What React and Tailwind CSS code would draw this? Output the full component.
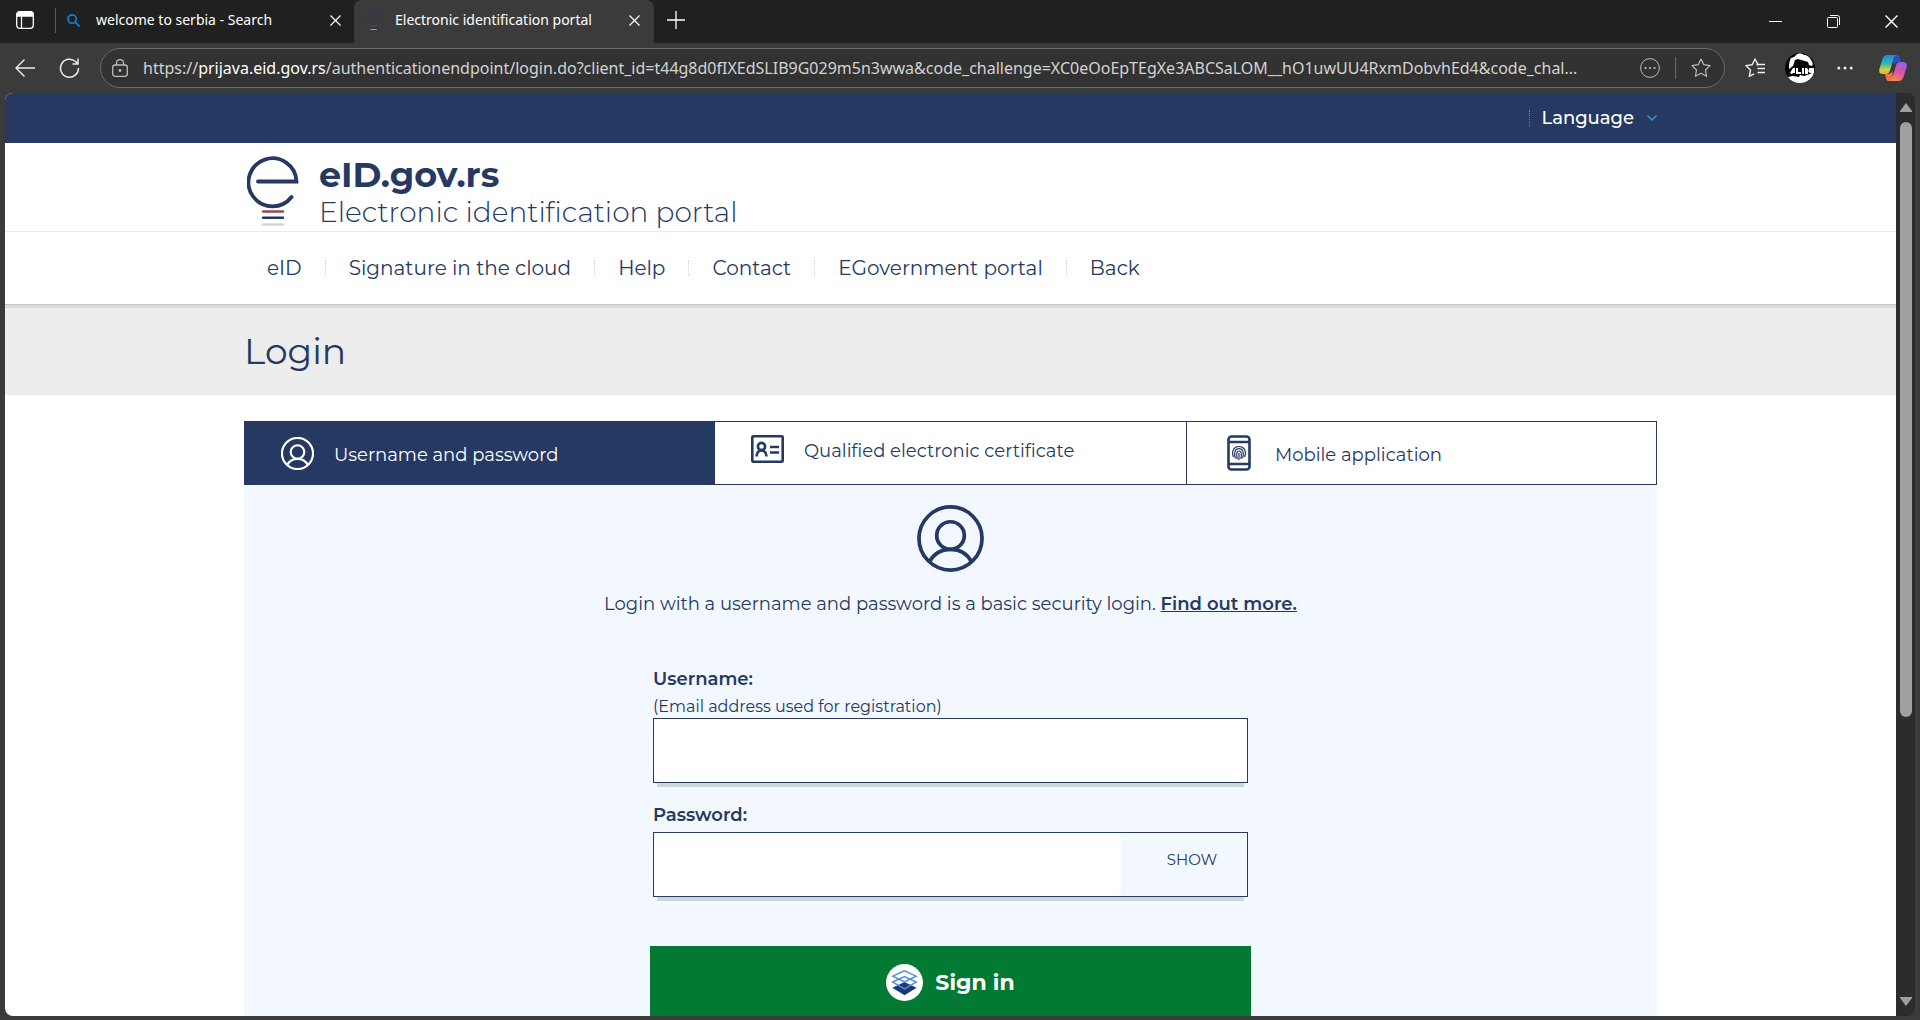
import React, { useState } from 'react';

const NAV_LINKS = ['eID', 'Signature in the cloud', 'Help', 'Contact', 'EGovernment portal', 'Back'];

function CloseIcon({ className }) {
  return (
    <svg viewBox="0 0 12 12" className={className} fill="none" stroke="currentColor" strokeWidth="1.3">
      <path d="M.5.5l11 11M11.5.5l-11 11" />
    </svg>
  );
}

function UserIcon({ className, strokeWidth }) {
  return (
    <svg viewBox="0 0 68 68" className={className} fill="none" stroke="currentColor" strokeWidth={strokeWidth}>
      <circle cx="34" cy="34" r="32" />
      <circle cx="34" cy="31" r="14" />
      <path d="M12.500 58C17 49 24.500 45 34 45s17 4 21.500 13" />
    </svg>
  );
}

function CertificateIcon() {
  return (
    <svg viewBox="0 0 33 28" className="h-7 w-[33px]" fill="none" stroke="currentColor" strokeWidth="2.600">
      <rect x="1.300" y="1.300" width="30.400" height="25.400" rx="1" />
      <circle cx="10.500" cy="11.500" r="3.600" />
      <path d="M5.500 21.500c.3-4 2.200-6 5-6s4.700 2 5 6M19 12h9M19 17.500h9" />
    </svg>
  );
}

function PhoneIcon() {
  return (
    <svg viewBox="0 0 24 36" className="h-9 w-6" fill="none" stroke="currentColor">
      <rect x="1.500" y="1.500" width="21" height="33" rx="3" strokeWidth="2.600" />
      <path d="M1.500 7h21M1.500 29h21" strokeWidth="2.600" />
      <g strokeWidth="1.200">
        <path d="M6.500 22c-2.500-6 .5-10.500 5.500-10.500S20 16 17.500 22" />
        <path d="M8.500 23.500c-2-5.500-.5-9.800 3.500-9.800s5.400 4.500 3.500 9.500" />
        <path d="M10.300 24.300c-1-4.500-1-8.300 1.700-8.300s2.800 4 1.800 8" />
        <path d="M12 18v7" />
      </g>
    </svg>
  );
}

function PortalLogo({ className }) {
  return (
    <svg viewBox="0 0 52 70" className={className} fill="none" strokeLinecap="round">
      <path d="M44.500 41A24 24 0 1 1 49.500 25.500H11" stroke="#253962" strokeWidth="3.800" />
      <path d="M16 55.500h20" stroke="#9b4650" strokeWidth="2.400" />
      <path d="M16 61.800h20" stroke="#253962" strokeWidth="2.400" />
      <path d="M16 68.500h20" stroke="#d6d6d8" strokeWidth="2.400" />
    </svg>
  );
}

function CopilotIcon() {
  return (
    <svg viewBox="0 0 28 26" className="h-[26px] w-7">
      <defs>
        <linearGradient id="cpLeft" x1="0" y1="0" x2="0" y2="1">
          <stop offset="0" stopColor="#1b8be0" />
          <stop offset=".45" stopColor="#35b5b0" />
          <stop offset=".75" stopColor="#c9d13c" />
          <stop offset="1" stopColor="#f0b429" />
        </linearGradient>
        <linearGradient id="cpRight" x1=".6" y1="0" x2=".2" y2="1">
          <stop offset="0" stopColor="#9a5cf0" />
          <stop offset=".5" stopColor="#e0579a" />
          <stop offset="1" stopColor="#f98b52" />
        </linearGradient>
      </defs>
      <path d="M14 0h4c1.800 0 2.500 1 3 2.600L22 7h-3c-2.500 0-3.500 1.300-4.200 3.500z" fill="#2453c9" />
      <path d="M14 26h-4c-1.800 0-2.500-1-3-2.600L6 19h3c2.500 0 3.500-1.300 4.200-3.500z" fill="#f2723f" />
      <path d="M8.500 0H18c-2 0-2.800 1.500-3.400 3.400L11 15.500C10.200 18 9 19 6.500 19H3.800C.8 19-.4 17 .4 14L3.500 4C4.400 1.300 6 0 8.500 0z" fill="url(#cpLeft)" />
      <path d="M19.500 26H10c2 0 2.800-1.500 3.400-3.400L17 10.500C17.800 8 19 7 21.500 7h2.700c3 0 4.200 2 3.400 5l-3.100 10c-.9 2.700-2.500 4-5 4z" fill="url(#cpRight)" />
    </svg>
  );
}

function Avatar() {
  return (
    <svg viewBox="0 0 30 30" className="size-[30px]">
      <circle cx="15" cy="15" r="15" fill="#050505" />
      <path d="M6 5c2-1 4-1 5-3 2-2 6-2 8 0 3 0 6 2 7 5 2 2 2 5 1 6l-3-1-1-3-10-3-3 1-2 6-4 3c0-4 0-8 2-11z" fill="#fff" />
      <path d="M3 24l5-1 6 1 1-2 4 1 6-2 4-2c-1 6-7 11-14 11-5 0-9-2-12-6z" fill="#fff" />
      <path d="M5 20l3-5h2v5H8l-1 1zM11 15h2v4h3v2h-5zM17 15h2v6h-2zM20 15h2l2 3v-3h5v5h-4l-2-2v3h-3z" fill="#fff" />
    </svg>
  );
}

function TabStrip() {
  return (
    <div className="flex h-[43px] items-stretch bg-[#202020] text-white">
      <div className="flex w-[354px] items-center pb-[3px] pl-4 pr-[13px]">
        <button type="button" aria-label="Tab actions" className="mr-[21px]">
          <svg viewBox="0 0 18 18" className="size-[18px]" fill="none" stroke="currentColor" strokeWidth="1.300">
            <rect x=".7" y=".7" width="16.600" height="16.600" rx="3" />
            <path d="M1 3.500C1 2 2 1 3.500 1h11C16 1 17 2 17 3.500V5H1z" fill="currentColor" />
            <path d="M5.500 5v12" />
          </svg>
        </button>
        <span className="h-[25px] w-px bg-[#5a5a5a]" />
        <svg viewBox="0 0 14 14" className="ml-[11px] size-[13px] text-[#1480d8]" fill="none" stroke="currentColor" strokeWidth="1.800">
          <circle cx="5.500" cy="5.500" r="4.500" />
          <path d="M9 9l4.500 4.500" />
        </svg>
        <span className="ml-4 flex-1 whitespace-nowrap text-sm">welcome to serbia - Search</span>
        <button type="button" aria-label="Close tab"><CloseIcon className="size-[11px]" /></button>
      </div>
      <div className="flex w-[300px] items-center rounded-t-lg bg-[#3b3b3b] pb-[3px] pl-3 pr-[14px]">
        <PortalLogo className="h-5 w-[15px]" />
        <span className="ml-[14px] flex-1 whitespace-nowrap text-sm">Electronic identification portal</span>
        <button type="button" aria-label="Close tab"><CloseIcon className="size-[11px]" /></button>
      </div>
      <button type="button" aria-label="New tab" className="px-[13px] pb-[3px]">
        <svg viewBox="0 0 18 18" className="size-[18px]" stroke="currentColor" strokeWidth="1.300">
          <path d="M9 0v18M0 9h18" />
        </svg>
      </button>
      <div className="ml-auto flex">
        <button type="button" aria-label="Minimize" className="flex w-[58px] items-center justify-center">
          <span className="h-px w-[13px] bg-white" />
        </button>
        <button type="button" aria-label="Restore" className="flex w-[58px] items-center justify-center">
          <svg viewBox="0 0 13 13" className="size-[13px]" fill="none" stroke="currentColor">
            <rect x=".5" y="2.500" width="10" height="10" rx="1" />
            <path d="M3 .5h7.500a2 2 0 0 1 2 2V10" />
          </svg>
        </button>
        <button type="button" aria-label="Close" className="flex w-[58px] items-center justify-center">
          <CloseIcon className="size-[13px]" />
        </button>
      </div>
    </div>
  );
}

function Toolbar() {
  return (
    <div className="flex h-[50px] items-center bg-[#3b3b3b] pl-[15px] pr-[13px] text-[#eee]">
      <button type="button" aria-label="Back">
        <svg viewBox="0 0 20 18" className="h-[18px] w-5" fill="none" stroke="currentColor" strokeWidth="1.400">
          <path d="M20 9H1M9.500.5L1 9l8.500 8.500" />
        </svg>
      </button>
      <button type="button" aria-label="Refresh" className="ml-6">
        <svg viewBox="0 0 21 20" className="h-5 w-[21px]" fill="none" stroke="currentColor" strokeWidth="1.500">
          <path d="M19.500 10A9 9 0 1 1 16.500 3.500l2 2M19 .5v5.500h-5.500" />
        </svg>
      </button>
      <div className="ml-5 flex h-10 min-w-0 flex-1 items-center rounded-full border border-[#6b6b6b] bg-[#323232] pl-[11px] pr-[13px] text-[#bbb]">
        <svg viewBox="0 0 16 18" className="h-[18px] w-4" fill="none" stroke="currentColor" strokeWidth="1.300">
          <rect x=".7" y="6" width="14.600" height="11.300" rx="2.500" />
          <path d="M4.500 6V4a3.500 3.500 0 0 1 7 0v2" />
          <circle cx="8" cy="11.500" r=".8" fill="currentColor" />
        </svg>
        <div className="ml-[15px] min-w-0 flex-1 overflow-hidden whitespace-nowrap text-base text-[#d2d2d2]">
          https://<span className="text-white">prijava.eid.gov.rs</span>
          /authenticationendpoint/login.do?client_id=t44g8d0fIXEdSLIB9G029m5n3wwa&amp;code_challenge=XC0eOoEpTEgXe3ABCSaLOM__hO1uwUU4RxmDobvhEd4&amp;code_chal...
        </div>
        <button type="button" aria-label="Page actions" className="ml-[15px]">
          <svg viewBox="0 0 20 20" className="size-5" fill="none" stroke="currentColor">
            <circle cx="10" cy="10" r="9.400" />
            <path d="M5.500 10h.1M10 10h.1M14.500 10h.1" strokeWidth="2.200" strokeLinecap="round" />
          </svg>
        </button>
        <span className="ml-[15px] h-[22px] w-px bg-[#6b6b6b]" />
        <button type="button" aria-label="Add to favorites" className="ml-[15px]">
          <svg viewBox="0 0 20 20" className="size-5" fill="none" stroke="currentColor" strokeWidth="1.200" strokeLinejoin="round">
            <path d="M10 1l2.800 5.700 6.200.9-4.500 4.400 1.100 6.300L10 15.300l-5.600 3 1.100-6.300L1 7.600l6.200-.9z" />
          </svg>
        </button>
      </div>
      <button type="button" aria-label="Favorites" className="ml-5">
        <svg viewBox="0 0 20 20" className="size-5" fill="none" stroke="currentColor" strokeWidth="1.400" strokeLinejoin="round">
          <path d="M11.500 6.700H13L10 1 7.200 6.700.8 7.600l4.700 4.400-1.200 6.400L9 15.800M12.500 10.500H20M12.500 14.500H20M12.500 6.500H20" />
        </svg>
      </button>
      <button type="button" aria-label="Profile" className="ml-5"><Avatar /></button>
      <button type="button" aria-label="Settings and more" className="ml-[22px]">
        <svg viewBox="0 0 16 4" className="h-1 w-4" fill="currentColor">
          <circle cx="1.800" cy="2" r="1.500" />
          <circle cx="8" cy="2" r="1.500" />
          <circle cx="14.200" cy="2" r="1.500" />
        </svg>
      </button>
      <button type="button" aria-label="Copilot" className="ml-[26px]"><CopilotIcon /></button>
    </div>
  );
}

function Scrollbar() {
  return (
    <div className="flex w-[19px] flex-col items-center rounded-r-lg bg-[#2c2c2c] py-[10px]">
      <svg viewBox="0 0 12 9" className="h-[9px] w-3" fill="#9f9f9f"><path d="M6 0l6 8v1H0V8z" /></svg>
      <div className="mt-[10px] flex-1">
        <div className="h-[68%] w-3 rounded-full bg-[#9f9f9f]" />
      </div>
      <svg viewBox="0 0 12 9" className="h-[9px] w-3" fill="#9f9f9f"><path d="M6 9l6-8V0H0v1z" /></svg>
    </div>
  );
}

function LoginForm() {
  const [visible, setVisible] = useState(false);

  return (
    <form className="mx-auto mt-[47px] w-[601px]" onSubmit={(event) => event.preventDefault()}>
      <div className="px-[3px]">
        <label htmlFor="username" className="block">
          <span className="block text-lg font-semibold">Username:</span>
          <span className="mt-[3px] block whitespace-nowrap text-base leading-[21px]">(Email address used for registration)</span>
        </label>
        <div className="mt-px h-[65px] border border-[#2a3a58] shadow-[0_8px_0_-4px_#c9d8dc]">
          <input id="username" type="text" className="block h-full w-full rounded-md bg-white px-4 text-lg outline-none" />
        </div>
        <label htmlFor="password" className="mt-[18px] block text-lg font-semibold">Password:</label>
        <div className="mt-[3px] flex h-[65px] border border-[#2a3a58] shadow-[0_8px_0_-4px_#c9d8dc]">
          <input
            id="password"
            type={visible ? 'text' : 'password'}
            className="block h-full min-w-0 flex-1 rounded-md bg-white px-4 text-lg outline-none"
          />
          <button type="button" onClick={() => setVisible(!visible)} className="w-[126px] pb-2 pl-4 text-[15px]">
            SHOW
          </button>
        </div>
      </div>
      <button type="submit" className="mt-[49px] flex h-[73px] w-full items-center justify-center gap-3 bg-[#027a33] text-[22px] font-bold text-white">
        <svg viewBox="0 0 38 38" className="size-[37px]">
          <circle cx="19" cy="19" r="19" fill="#fff" />
          <path d="M6.500 24.500l12.500-6 12.500 6L19 32z" fill="#1b3a77" />
          <g fill="none" stroke="#4f8edb" strokeWidth="1.500">
            <path d="M7 12.500l12-5.500 12 5.500-12 6z" />
            <path d="M7 18.500l12-5.500 12 5.500-12 7z" />
          </g>
        </svg>
        Sign in
      </button>
    </form>
  );
}

function PortalPage() {
  return (
    <div className="min-w-0 flex-1 overflow-hidden rounded-l-lg bg-white font-['Montserrat',Inter,sans-serif] text-[#253962]">
      <div className="h-[50px] bg-[#253962]">
        <div className="mx-auto flex h-full w-[1413px] max-w-full items-center justify-end">
          <button type="button" className="flex items-center border-l border-dotted border-[#4b86d3] pl-[11px] text-lg leading-4 font-medium text-white">
            Language
            <svg viewBox="0 0 10 6" className="ml-[13px] h-[6px] w-[10px]" fill="none" stroke="#4b86d3" strokeWidth="1.500">
              <path d="M.5.5L5 5 9.500.5" />
            </svg>
          </button>
        </div>
      </div>

      <header>
        <div className="h-[89px] border-b border-[#e9e9e9]">
          <a href="#" className="mx-auto flex w-[1413px] max-w-full gap-5 pl-[3px] pt-[13px]">
            <PortalLogo className="h-[70px] w-[52px]" />
            <span className="block">
              <span className="block text-[35px] leading-[38px] font-bold">eID.gov.rs</span>
              <span className="block text-[28px] leading-[36px] font-light">Electronic identification portal</span>
            </span>
          </a>
        </div>
        <nav className="mx-auto flex h-[72px] w-[1413px] max-w-full items-center text-xl">
          {NAV_LINKS.map((label) => (
            <a
              key={label}
              href="#"
              className="border-l border-dotted border-[#cfcfcf] px-[23px] leading-4 first:border-l-0"
            >
              {label}
            </a>
          ))}
        </nav>
      </header>

      <div className="h-[91px] border-t border-[#c6c6c6] bg-[#ededed] shadow-[inset_0_3px_0_#dedede]">
        <h1 className="mx-auto w-[1413px] max-w-full pt-[22px] text-[36px] leading-[48px]">Login</h1>
      </div>

      <main className="mx-auto mt-[26px] h-full w-[1413px] max-w-full bg-[#f3f8ff]">
        <div className="grid h-16 grid-cols-3 text-lg">
          <button type="button" className="flex items-center gap-5 bg-[#253962] pl-[37px] text-white">
            <UserIcon className="size-[33px]" strokeWidth="4.500" />
            <span className="pt-1">Username and password</span>
          </button>
          <button type="button" className="flex items-center gap-5 border-y border-[#2a3a58] bg-white pb-2 pl-9">
            <CertificateIcon />
            <span className="pt-1">Qualified electronic certificate</span>
          </button>
          <button type="button" className="flex items-center gap-6 border border-[#2a3a58] bg-white pl-10">
            <PhoneIcon />
            <span className="pt-1">Mobile application</span>
          </button>
        </div>
        <UserIcon className="mx-auto mt-5 size-[67px]" strokeWidth="3.800" />
        <p className="mt-[18px] text-center text-lg">
          Login with a username and password is a basic security login.{' '}
          <a href="#" className="font-semibold underline">Find out more.</a>
        </p>
        <LoginForm />
      </main>
    </div>
  );
}

export default function App() {
  return (
    <div className="flex h-screen flex-col overflow-hidden bg-[#3b3b3b] font-['Segoe_UI','Noto_Sans',sans-serif]">
      <TabStrip />
      <Toolbar />
      <div className="mx-[5px] mb-1 flex min-h-0 flex-1">
        <PortalPage />
        <Scrollbar />
      </div>
    </div>
  );
}
